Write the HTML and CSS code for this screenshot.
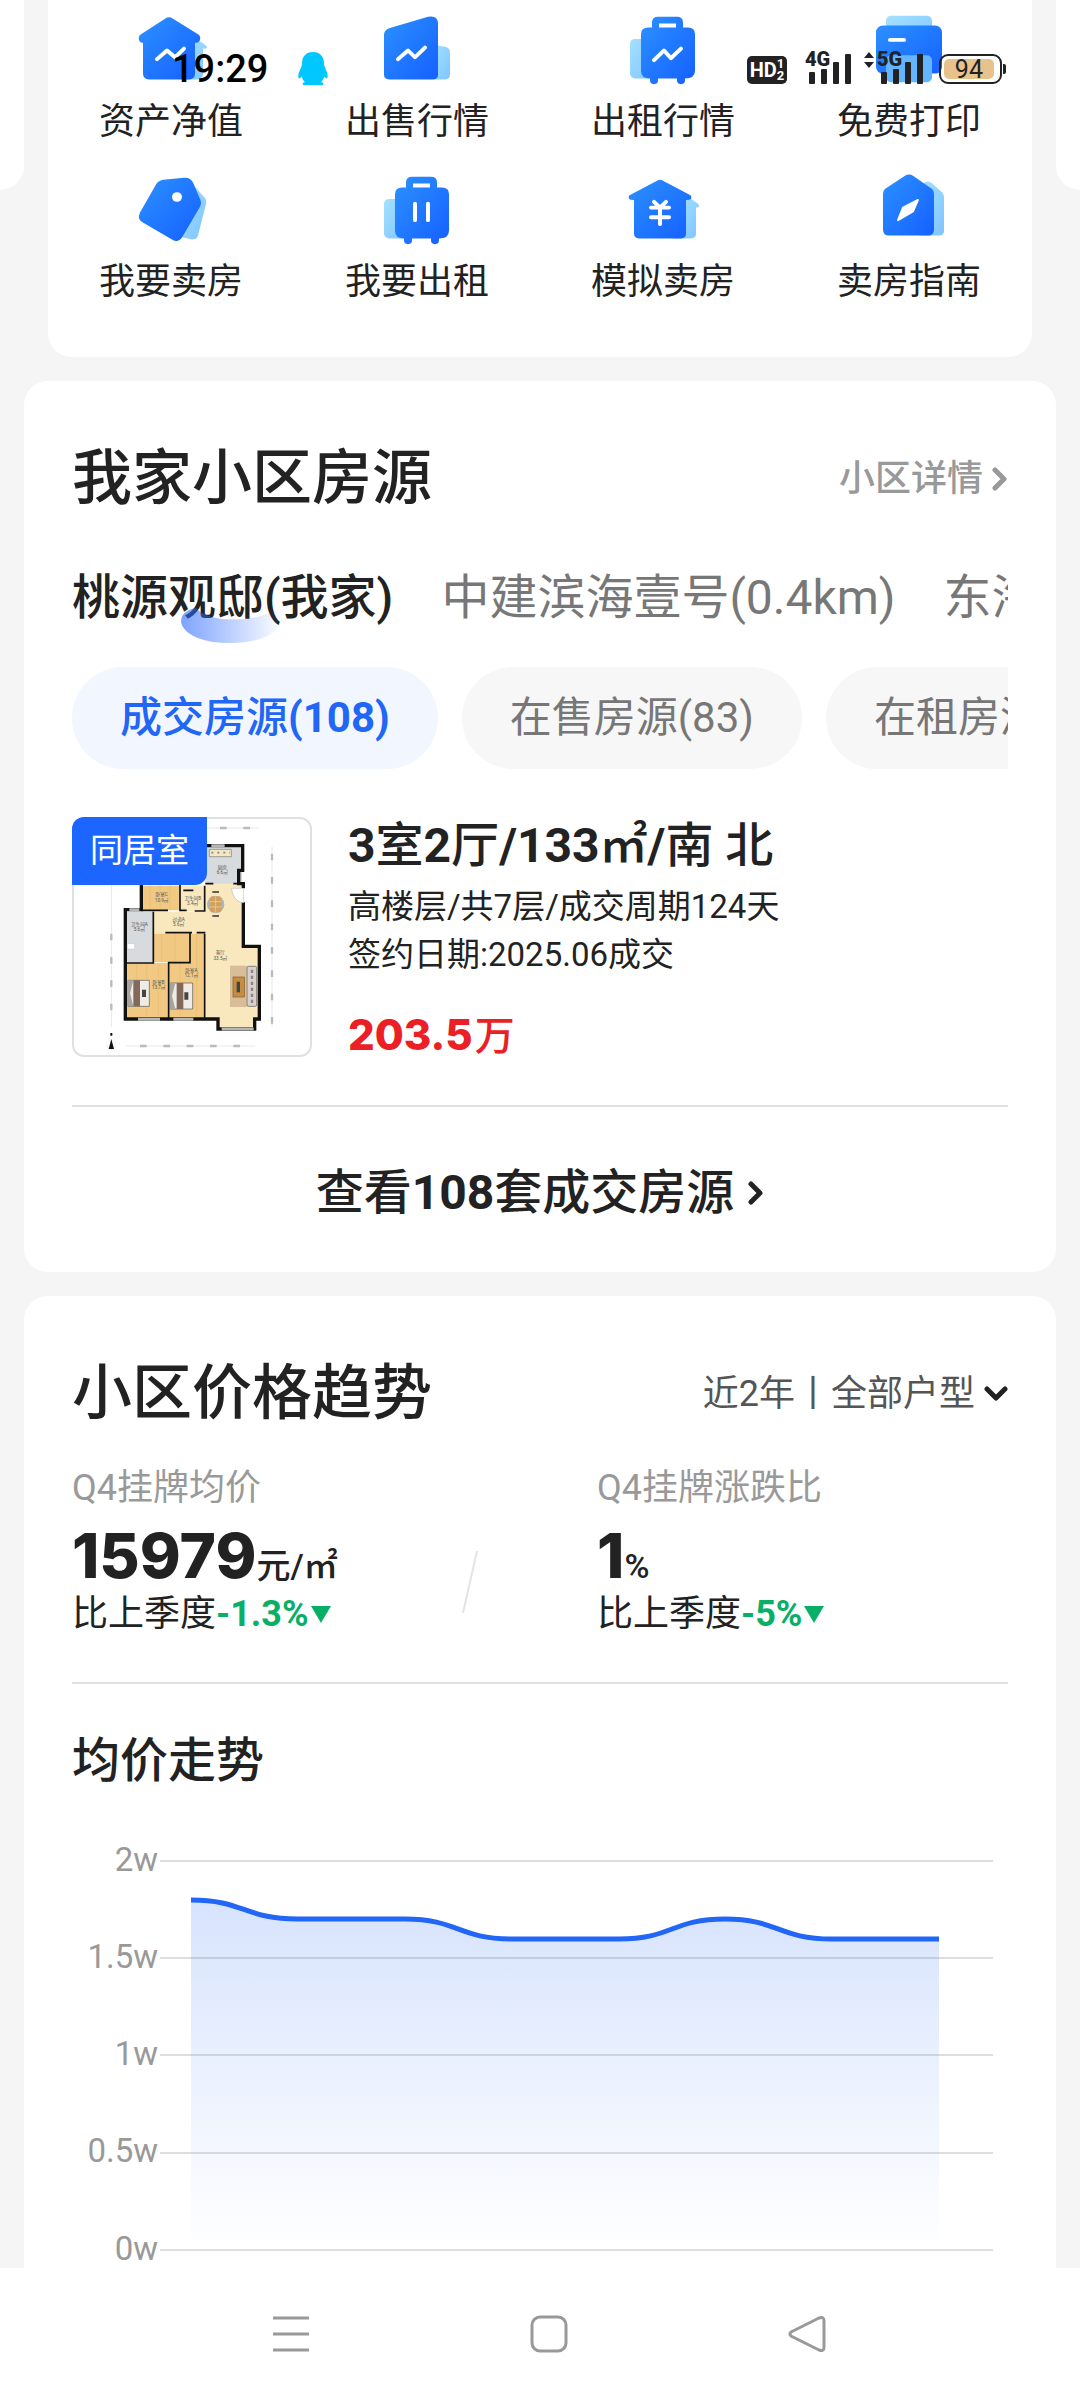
FILE: index.html
```html
<!DOCTYPE html>
<html lang="zh-CN">

<head>
    <meta charset="UTF-8">
    <meta name="viewport" content="width=device-width, initial-scale=1.0">
    <title>我家小区房源</title>
    <link rel="stylesheet" href="styles.css">
</head>

<body>
    <!-- shared gradients -->
    <svg class="defs" width="0" height="0" aria-hidden="true">
        <defs>
            <linearGradient id="blue" x1="0" y1="0" x2="1" y2="1">
                <stop offset="0" stop-color="#2c91ff" />
                <stop offset="1" stop-color="#1560ff" />
            </linearGradient>
            <linearGradient id="light" x1="0" y1="0" x2="1" y2="1">
                <stop offset="0" stop-color="#a4e2ff" />
                <stop offset="1" stop-color="#80c4ff" />
            </linearGradient>
        </defs>
    </svg>

    <div class="status">
        <span class="time">19:29</span>
        <svg class="qq" width="30" height="34" viewBox="0 0 30 36" preserveAspectRatio="none">
            <path fill="#00c8ff" d="M15 0C8 0 4 5 4 12c0 3-1 4-2 7-2 4-2 8-1 9 1 0 2-1 3-2 0 2 1 4 3 6-2 0-3 1-2 3h20c1-2 0-3-2-3 2-2 3-4 3-6 1 1 2 2 3 2 1-1 1-5-1-9-1-3-2-4-2-7C26 5 22 0 15 0z" />
        </svg>
        <div class="status-right">
            <span class="hd">HD<span class="hd-sim"><i>1</i><i>2</i></span></span>
            <span class="signal">
                <b>4G</b>
                <svg width="42" height="30" viewBox="0 0 42 30" fill="#222"><rect y="18" width="6" height="12" rx="1" /><rect x="12" y="15" width="6" height="15" rx="1" /><rect x="24" y="8" width="6" height="22" rx="1" /><rect x="36" width="6" height="30" rx="1" /></svg>
            </span>
            <span class="signal signal-data">
                <svg class="arrows" width="10" height="16" viewBox="0 0 10 16" fill="#222"><path d="M0 6l5-6 5 6zM0 10h10l-5 6z" /></svg>
                <b>5G</b>
                <svg width="42" height="30" viewBox="0 0 42 30" fill="#222"><rect y="18" width="6" height="12" rx="1" /><rect x="12" y="15" width="6" height="15" rx="1" /><rect x="24" y="8" width="6" height="22" rx="1" /><rect x="36" width="6" height="30" rx="1" /></svg>
            </span>
            <span class="battery"><span class="battery-fill">94</span></span>
        </div>
    </div>

    <div class="tools">
        <div class="peek peek-left"></div>
        <nav class="tools-card">
            <a class="tool" href="#">
                <svg width="80" height="77" viewBox="0 0 80 80" preserveAspectRatio="none">
                    <path fill="url(#light)" d="M60 31h10l5 4c2 2 1 3-1 3h-2v26q0 6-6 6H50V31z" />
                    <path fill="url(#blue)" d="M34 7q4-3 8 0l25 16q3 2 2 6-1 3-5 3v32q0 6-6 6H18q-6 0-6-6V32q-3 0-4-3-1-4 2-6z" />
                    <path class="mark" d="M26 49l10-9 8 7 9-9" />
                </svg>
                <span>资产净值</span>
            </a>
            <a class="tool" href="#">
                <svg width="80" height="77" viewBox="0 0 80 80" preserveAspectRatio="none">
                    <path fill="url(#light)" d="M56 34l12 2q5 1 5 6v23q0 5-5 5H56z" />
                    <path fill="url(#blue)" d="M12 17L51 5q9-2 10 6v54q0 5-5 5H12q-5 0-5-5V24q0-5 5-7z" />
                    <path class="mark" d="M21 49l10-9 7 7 10-10" />
                </svg>
                <span>出售行情</span>
            </a>
            <a class="tool" href="#">
                <svg width="80" height="77" viewBox="0 0 80 80" preserveAspectRatio="none">
                    <rect x="7" y="28" width="24" height="41" rx="5" fill="url(#light)" />
                    <path fill="url(#blue)" fill-rule="evenodd" d="M29 16v-5q0-6 6-6h19q6 0 6 6v5h5q7 0 7 7v38q0 8-10 8v2q0 4-4 4t-4-4v-2H35v2q0 4-4 4t-4-4v-2q-9 0-9-8V23q0-7 7-7zM36 12v4h17v-4z" />
                    <path class="mark" d="M31 50l10-10 7 8 10-10" />
                </svg>
                <span>出租行情</span>
            </a>
            <a class="tool" href="#">
                <svg width="80" height="77" viewBox="0 0 80 80" preserveAspectRatio="none">
                    <rect x="17" y="4" width="46" height="30" rx="5" fill="url(#light)" />
                    <rect x="7" y="14" width="66" height="50" rx="7" fill="url(#blue)" />
                    <rect x="17" y="45" width="46" height="28" rx="5" fill="#64b5ff" />
                    <path class="mark" d="M21 29h14" />
                </svg>
                <span>免费打印</span>
            </a>
            <a class="tool" href="#">
                <svg width="80" height="77" viewBox="0 0 80 80" preserveAspectRatio="none">
                    <path fill="url(#light)" d="M58 8l15 18q3 3 2 7l-8 33q-1 4-6 4L44 66z" />
                    <path fill="url(#blue)" d="M32 8l21-2q6-1 9 5l7 17q2 4 0 8L51 68q-4 6-10 2L11 52q-5-3-2-10l16-29q2-4 7-5z" />
                    <circle cx="46" cy="26" r="5" fill="#fff" />
                </svg>
                <span>我要卖房</span>
            </a>
            <a class="tool" href="#">
                <svg width="80" height="77" viewBox="0 0 80 80" preserveAspectRatio="none">
                    <rect x="7" y="28" width="24" height="41" rx="5" fill="url(#light)" />
                    <path fill="url(#blue)" fill-rule="evenodd" d="M29 16v-5q0-6 6-6h19q6 0 6 6v5h5q7 0 7 7v38q0 8-10 8v2q0 4-4 4t-4-4v-2H35v2q0 4-4 4t-4-4v-2q-9 0-9-8V23q0-7 7-7zM36 12v4h17v-4z" />
                    <path class="mark" d="M38 33v17M51 33v17" />
                </svg>
                <span>我要出租</span>
            </a>
            <a class="tool" href="#">
                <svg width="80" height="77" viewBox="0 0 80 80" preserveAspectRatio="none">
                    <path fill="url(#light)" d="M62 28h6l7 5q2 2 0 4h-2v27q0 5-5 5H50V28z" />
                    <path fill="url(#blue)" d="M34 9q3-2 6 0l27 15q2 1 1 4-1 1-5 1v35q0 5-5 5H16q-5 0-5-5V29q-4 0-5-1-1-3 1-4z" />
                    <path class="mark" d="M31 31l6 6 6-6M28 37h18M28 47h18M37 37v17" />
                </svg>
                <span>模拟卖房</span>
            </a>
            <a class="tool" href="#">
                <svg width="80" height="77" viewBox="0 0 80 80" preserveAspectRatio="none">
                    <path fill="url(#light)" d="M55 11q4-2 7 0l11 10q2 2 2 5v35q0 5-5 5H50z" />
                    <path fill="url(#blue)" d="M36 4q4-3 8 0l18 13q3 2 3 6v37q0 6-6 6H20q-6 0-6-6V23q0-4 3-6z" />
                    <path fill="#fff" stroke="#fff" stroke-width="2" stroke-linejoin="round" d="M49 29l-5 12-15 9 5-13z" />
                </svg>
                <span>卖房指南</span>
            </a>
        </nav>
        <div class="peek peek-right"></div>
    </div>

    <section class="card">
        <div class="card-head">
            <h2>我家小区房源</h2>
            <a class="more" href="#">小区详情
                <svg width="16" height="24" viewBox="0 0 16 24"><path d="M3 3l9 9-9 9" fill="none" stroke="#999" stroke-width="5" stroke-linecap="round" stroke-linejoin="round" /></svg>
            </a>
        </div>

        <div class="tabs">
            <button class="tab tab-on" type="button">桃源观邸(我家)
                <svg class="arc" width="104" height="36" viewBox="0 0 104 38" preserveAspectRatio="none">
                    <defs>
                        <linearGradient id="arc" x1="0" x2="1">
                            <stop offset="0" stop-color="#2f6bff" stop-opacity=".62" />
                            <stop offset="1" stop-color="#2f6bff" stop-opacity="0" />
                        </linearGradient>
                    </defs>
                    <path fill="url(#arc)" d="M16 0C3 2-2 12 3 20c7 12 27 17 48 17 26 0 46-9 51-22 3-8 0-12-8-13-8 7-25 10-43 10C36 12 23 8 16 0z" />
                </svg>
            </button>
            <button class="tab" type="button">中建滨海壹号(0.4km)</button>
            <button class="tab" type="button">东海</button>
        </div>

        <div class="pills">
            <button class="pill pill-on" type="button">成交房源<b>(108)</b></button>
            <button class="pill" type="button">在售房源(83)</button>
            <button class="pill" type="button">在租房源</button>
        </div>

        <a class="house" href="#">
            <div class="house-pic">
                <svg viewBox="72 56 708 708">
                    <!-- floors -->
                    <path fill="#f9e8bd" d="M466 240h112v200h50v216h-12v32H502v-34h-36zM310 334h160v66H310zM392 256h72v76h-72z" />
                    <path fill="#f1c983" d="M276 256h114v74H276zM310 400h110v86H310zM230 488h124v166H230zM358 400h106v254H358z" />
                    <path fill="none" stroke="#e9bd72" stroke-width="2" d="M300 256v74M330 256v74M360 256v74M335 400v86M375 400v86M260 488v50M290 488v50M325 488v166M390 488v60M440 400v254M290 620v34M390 630v24" />
                    <path fill="#d7dbdd" d="M230 334h80v152h-80zM466 140h110v110H466z" />
                    <!-- walls -->
                    <path fill="none" stroke="#111" stroke-width="10" d="M460 136h118v74h-12v40h14v14M580 306v132h48v218h-14v30H504v-30H226V328h48v-80" />
                    <path fill="none" stroke="#111" stroke-width="5" d="M226 488h84v-60M310 334v100M274 330h80M390 250v80h20M464 256v76h-30M400 270h30M346 397h80M420 397v90h-64v168M464 400v254M440 397h26M490 250h-24M550 250h20" />
                    <path fill="none" stroke="#b6b6b6" stroke-width="9" d="M264 657h66M370 657h60M515 686h96M484 136h40M238 328h30" />
                    <path fill="#fff" stroke="#888" d="M545 264h36c-2 20 0 30 0 44-20-4-34-18-36-44z" />
                    <!-- furniture -->
                    <path fill="#f4e8c4" stroke="#777" stroke-width="2" d="M478 147h66v22h-66z" />
                    <path stroke="#888" stroke-width="5" stroke-dasharray="6 12" d="M484 157h56" />
                    <path fill="#fff" stroke="#aaa" d="M232 430h22v16h-22z" />
                    <circle cx="497" cy="312" r="26" fill="#aeb3c0" />
                    <rect x="480" y="288" width="34" height="48" rx="8" fill="#d2a15d" />
                    <path fill="none" stroke="#333" stroke-width="5" d="M487 275h20M487 347h20" />
                    <path stroke="#f2d7a2" stroke-width="2" d="M480 304h34M480 320h34M497 288v48" />
                    <path fill="#efece6" stroke="#555" stroke-width="2" d="M234 540h64v78h-64zM360 548h68v78h-68z" />
                    <path fill="#82695b" d="M250 540h20v78h-20zM380 548h20v78h-20z" />
                    <path fill="#484344" d="M276 568h12v22h-12zM403 576h12v22h-12z" />
                    <path fill="#a7a3a0" d="M234 540h16l-10 39 10 39h-16zM360 548h16l-10 39 10 39h-16z" />
                    <rect x="540" y="496" width="50" height="124" fill="#d8bd98" />
                    <rect x="549" y="530" width="34" height="60" fill="#c68d42" stroke="#855a2c" stroke-width="2" />
                    <path fill="#3c4747" d="M560 544h10v32h-10z" />
                    <rect x="591" y="498" width="29" height="120" rx="4" fill="#d8d1cd" stroke="#555" stroke-width="2" />
                    <path stroke="#8d8380" stroke-width="7" stroke-dasharray="10 8" d="M606 508v100" />
                    <!-- dimension lines -->
                    <path fill="none" stroke="#ddd" stroke-width="2" d="M184 250v430M666 140v540M228 737h388M470 83h155" />
                    <path fill="none" stroke="#bbb" stroke-width="7" stroke-dasharray="20 50" d="M184 400v280M666 160v520M270 737h330M510 83h110" />
                    <circle cx="184" cy="733" r="14" fill="#fff" stroke="#ccc" />
                    <path fill="#111" d="M184 716l8 30h-16zM181 698h6v8h-6z" />
                    <!-- room names -->
                    <g class="rooms">
                        <text x="335" y="288">卧室C</text><text x="335" y="304">10.9㎡</text>
                        <text x="428" y="299">卫生间B</text><text x="428" y="314">3.4㎡</text>
                        <text x="386" y="362">过道A</text><text x="386" y="378">5.6㎡</text>
                        <text x="268" y="376">卫生间A</text><text x="268" y="392">5.6㎡</text>
                        <text x="517" y="205">厨房</text><text x="517" y="221">6.6㎡</text>
                        <text x="511" y="462">客厅</text><text x="511" y="478">33.5㎡</text>
                        <text x="326" y="550">卧室B</text><text x="326" y="566">13.7㎡</text>
                        <text x="424" y="514">卧室A</text><text x="424" y="530">12.1㎡</text>
                    </g>
                </svg>
                <span class="house-tag">同居室</span>
            </div>
            <div class="house-info">
                <h3><b>3</b>室<b>2</b>厅<b>/133</b>㎡<b>/</b>南 北</h3>
                <p>高楼层/共7层/成交周期124天</p>
                <p>签约日期:2025.06成交</p>
                <p class="price"><b>203.5</b>万</p>
            </div>
        </a>

        <a class="all" href="#"><span>查看<b>108</b>套成交房源</span>
            <svg width="16" height="24" viewBox="0 0 16 24"><path d="M3 3l9 9-9 9" fill="none" stroke="#222" stroke-width="5" stroke-linecap="round" stroke-linejoin="round" /></svg>
        </a>
    </section>

    <section class="card trend">
        <div class="card-head">
            <h2>小区价格趋势</h2>
            <button class="filter" type="button">近2年丨全部户型
                <svg width="24" height="16" viewBox="0 0 24 16"><path d="M3 3l9 9 9-9" fill="none" stroke="#222" stroke-width="5" stroke-linecap="round" stroke-linejoin="round" /></svg>
            </button>
        </div>

        <div class="stats">
            <div class="stat">
                <p class="stat-name">Q4挂牌均价</p>
                <p class="stat-num"><b>15979</b>元/㎡</p>
                <p class="stat-diff">比上季度<b>-1.3%</b><svg width="20" height="17" viewBox="0 0 20 17"><path fill="#09af66" d="M0 0h20L10 17z" /></svg></p>
            </div>
            <svg class="slash" width="16" height="64" viewBox="0 0 16 64"><path d="M15 1L1 63" stroke="#e4e4e4" stroke-width="2" /></svg>
            <div class="stat">
                <p class="stat-name">Q4挂牌涨跌比</p>
                <p class="stat-num"><b>1</b>%</p>
                <p class="stat-diff">比上季度<b>-5%</b><svg width="20" height="17" viewBox="0 0 20 17"><path fill="#09af66" d="M0 0h20L10 17z" /></svg></p>
            </div>
        </div>

        <h3 class="chart-title">均价走势</h3>
        <svg class="chart" viewBox="0 0 936 428">
            <defs>
                <linearGradient id="area" x1="0" y1="0" x2="0" y2="1">
                    <stop offset="0" stop-color="#2166f5" stop-opacity=".18" />
                    <stop offset="1" stop-color="#2166f5" stop-opacity="0" />
                </linearGradient>
            </defs>
            <g class="chart-labels">
                <text x="86" y="31">2w</text>
                <text x="86" y="128">1.5w</text>
                <text x="86" y="225">1w</text>
                <text x="86" y="322">0.5w</text>
                <text x="86" y="420">0w</text>
            </g>
            <path stroke="#dedede" stroke-width="2" d="M88 21h833M88 118h833M88 215h833M88 313h833M88 410h833" />
            <path fill="url(#area)" d="M119 60C172 60 172 79 226 79H333C386 79 386 99 440 99H547C600 99 600 79 653 79S706 99 760 99H867V410H119z" />
            <path fill="none" stroke="#2166f5" stroke-width="5" d="M119 60C172 60 172 79 226 79H333C386 79 386 99 440 99H547C600 99 600 79 653 79S706 99 760 99H867" />
        </svg>
    </section>

    <div class="sysnav">
        <button type="button" aria-label="菜单"><svg width="40" height="40" viewBox="0 0 40 40"><path d="M2 4h36M2 20h36M2 36h36" /></svg></button>
        <button type="button" aria-label="主页"><svg width="40" height="40" viewBox="0 0 40 40"><rect x="3" y="3" width="34" height="34" rx="8" /></svg></button>
        <button type="button" aria-label="返回"><svg width="40" height="40" viewBox="0 0 40 40"><path d="M4 18L32 4q5-2 5 3v26q0 5-5 3L4 22q-2-2 0-4z" /></svg></button>
    </div>
</body>

</html>
```
FILE: styles.css
```css
* {
    box-sizing: border-box;
}

body {
    margin: 0;
    background: #f5f5f5;
    color: #222;
    font-family: Roboto, "Noto Sans CJK SC", sans-serif;
    font-size: 36px;
    line-height: 48px;
}

h2, h3, p {
    margin: 0;
}

a {
    color: inherit;
    text-decoration: none;
}

button {
    padding: 0;
    border: 0;
    background: none;
    color: inherit;
    font: inherit;
    white-space: nowrap;
}

svg {
    display: block;
    flex: none;
}

.defs {
    position: absolute;
}

/* status bar floats over the page */
.status {
    position: absolute;
    top: 45px;
    left: 0;
    right: 0;
    z-index: 2;
    display: flex;
    align-items: center;
    padding: 0 78px 0 172px;
    color: #000;
}

.time {
    font-size: 38px;
    font-weight: 500;
}

.qq {
    margin-left: 30px;
}

.status-right {
    display: flex;
    align-items: flex-end;
    margin-left: auto;
    height: 30px;
}

.hd {
    display: flex;
    align-items: center;
    justify-content: center;
    width: 40px;
    height: 28px;
    margin-right: 22px;
    border-radius: 5px;
    background: #222;
    color: #fff;
    font: bold 20px/28px "Liberation Sans Narrow", Roboto, sans-serif;
}

.hd-sim {
    display: flex;
    flex-direction: column;
    font-size: 13px;
    line-height: 12px;
}

.hd-sim i {
    font-style: normal;
}

.signal {
    position: relative;
    width: 42px;
    color: #222;
    font: bold 20px/20px "Liberation Sans Narrow", Roboto, sans-serif;
}

.signal b {
    position: absolute;
    bottom: 15px;
    left: -4px;
}

.signal-data {
    margin-left: 30px;
    margin-right: 16px;
}

.arrows {
    position: absolute;
    top: -2px;
    left: -17px;
}

.battery {
    position: relative;
    width: 63px;
    height: 30px;
    padding: 3px;
    border: 2px solid #222;
    border-radius: 9px;
}

.battery::after {
    content: "";
    position: absolute;
    top: 8px;
    right: -6px;
    width: 3px;
    height: 10px;
    border-radius: 0 2px 2px 0;
    background: #222;
}

.battery-fill {
    display: block;
    width: 94%;
    height: 20px;
    border-radius: 5px;
    background: #e8c28c;
    color: #222;
    font-size: 25px;
    line-height: 21px;
    text-align: center;
}

/* tools */
.tools {
    display: flex;
    gap: 24px;
    margin-bottom: 24px;
}

.peek {
    width: 24px;
    height: 190px;
    background: #fff;
}

.peek-left {
    border-radius: 0 0 24px 0;
}

.peek-right {
    border-radius: 0 0 0 24px;
}

.tools-card {
    flex: 1;
    display: grid;
    grid-template-columns: repeat(4, 1fr);
    row-gap: 26px;
    padding: 12px 0 51px;
    border-radius: 0 0 24px 24px;
    background: #fff;
}

.tool {
    display: flex;
    flex-direction: column;
    align-items: center;
    gap: 9px;
}

.mark {
    fill: none;
    stroke: #fff;
    stroke-width: 4;
    stroke-linecap: round;
    stroke-linejoin: round;
}

/* cards */
.card {
    margin: 0 24px 24px;
    padding: 62px 48px 0;
    border-radius: 24px;
    background: #fff;
}

.card-head {
    display: flex;
    align-items: center;
    justify-content: space-between;
}

.card-head h2 {
    font-size: 60px;
    font-weight: 500;
    line-height: 72px;
}

.more {
    display: flex;
    align-items: center;
    gap: 9px;
    color: #999;
    font-weight: 500;
}

.tabs {
    display: flex;
    gap: 48px;
    margin-top: 51px;
    padding-bottom: 20px;
    overflow: hidden;
}

.tab {
    position: relative;
    color: #777;
    font-size: 48px;
    line-height: 64px;
}

.tab-on {
    color: #222;
    font-weight: 500;
}

.arc {
    position: absolute;
    top: 42px;
    left: 50%;
    margin-left: -53px;
}

.pills {
    display: flex;
    gap: 24px;
    margin-top: 17px;
    overflow: hidden;
}

.pill {
    flex: none;
    padding: 0 48px;
    border-radius: 51px;
    background: #f7f7f7;
    color: #777;
    font-size: 42px;
    line-height: 102px;
}

.pill-on {
    background: #f2f6ff;
    color: #2166f5;
    font-weight: 500;
}

.house {
    display: flex;
    gap: 36px;
    margin-top: 48px;
    padding-bottom: 48px;
    border-bottom: 2px solid #e0e0e0;
}

.house-pic {
    position: relative;
    width: 240px;
    height: 240px;
    border: 2px solid #e0e0e0;
    border-radius: 12px;
}

.rooms {
    fill: #555;
    font-size: 14px;
    text-anchor: middle;
}

.house-tag {
    position: absolute;
    top: -2px;
    left: -2px;
    padding: 0 18px;
    border-radius: 12px 0 12px 0;
    background: #1c66ff;
    color: #fff;
    font-size: 33px;
    line-height: 68px;
}

.house-info h3 {
    margin-bottom: 8px;
    font-size: 48px;
    font-weight: 500;
    line-height: 58px;
}

.house-info p {
    font-size: 33px;
}

.house-info .price {
    display: flex;
    align-items: baseline;
    gap: 2px;
    margin-top: 36px;
    color: #eb1f25;
    font-size: 40px;
    font-weight: 500;
    line-height: 40px;
}

.price b {
    font-family: Inter, Lato, sans-serif;
    font-size: 42px;
    font-weight: 800;
}

.all {
    display: flex;
    align-items: center;
    justify-content: center;
    gap: 14px;
    padding: 50px 0 43px;
    font-size: 48px;
    font-weight: 500;
    line-height: 72px;
}

/* price trend */
.trend {
    margin-bottom: 0;
    border-radius: 24px 24px 0 0;
}

.filter {
    display: flex;
    align-items: center;
    gap: 9px;
    color: #555;
}

.stats {
    display: grid;
    grid-template-columns: 390fr 135fr 411fr;
    margin-top: 34px;
    padding-bottom: 44px;
    border-bottom: 2px solid #e0e0e0;
}

.slash {
    align-self: end;
    margin-bottom: 24px;
}

.stat-name {
    color: #999;
}

.stat-num {
    display: flex;
    align-items: baseline;
    margin-top: 12px;
    font-size: 34px;
    font-weight: 500;
}

.stat-num b {
    font-family: Inter, Lato, sans-serif;
    font-size: 62px;
    font-weight: 800;
    line-height: 64px;
}

.stat-diff {
    display: flex;
    align-items: center;
}

.stat-diff b {
    color: #09af66;
}

.stat-diff svg {
    margin-left: 2px;
}

.chart-title {
    margin: 45px 0 47px;
    font-size: 48px;
    font-weight: 500;
    line-height: 64px;
}

.chart {
    width: 100%;
}

.chart-labels {
    fill: #999;
    font-size: 33px;
    text-anchor: end;
}

/* system buttons */
.sysnav {
    display: flex;
    justify-content: center;
    gap: 218px;
    padding: 46px 0 46px 18px;
    background: #fff;
}

.sysnav svg {
    fill: none;
    stroke: #999;
    stroke-width: 3;
}
```
